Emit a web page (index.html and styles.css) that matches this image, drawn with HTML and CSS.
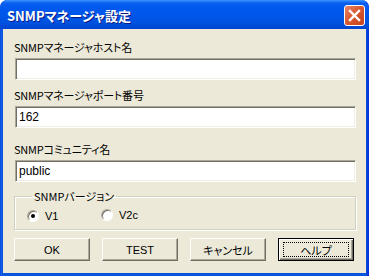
FILE: index.html
```html
<!DOCTYPE html>
<html lang="ja">
<head>
    <meta charset="UTF-8">
    <title>SNMPマネージャ設定</title>
    <link rel="stylesheet" href="styles.css">
</head>
<body>
    <div class="window">
        <div class="titlebar">
            <span class="title">SNMPマネージャ設定</span>
            <button class="close" title="閉じる">
                <svg width="13" height="13" viewBox="0 0 13 13">
                    <path d="M2 2 L11 11 M11 2 L2 11" stroke="#fff" stroke-width="2.4" stroke-linecap="square"/>
                </svg>
            </button>
        </div>

        <div class="client">
            <label class="field-label label-host">SNMPマネージャホスト名</label>
            <input class="textbox" type="text" value="">

            <label class="field-label label-port">SNMPマネージャポート番号</label>
            <input class="textbox" type="text" value="162">

            <label class="field-label label-community">SNMPコミュニティ名</label>
            <input class="textbox" type="text" value="public">

            <fieldset class="group">
                <legend>SNMPバージョン</legend>
                <div class="options">
                    <span class="option option-v1"><span class="radio checked"></span>V1</span>
                    <span class="option option-v2c"><span class="radio"></span>V2c</span>
                </div>
            </fieldset>

            <div class="buttons">
                <button class="btn">OK</button>
                <button class="btn">TEST</button>
                <button class="btn">キャンセル</button>
                <button class="btn default"><span class="focus">ヘルプ</span></button>
            </div>
        </div>
    </div>
</body>
</html>
```

FILE: styles.css
```css
* {
    margin: 0;
    padding: 0;
    box-sizing: border-box;
}

body {
    background-color: #fff;
    font-family: "Noto Sans CJK JP", sans-serif;
    font-size: 11px;
    font-feature-settings: "palt";
    color: #000;
}

/* Window frame */
.window {
    width: 369px;
    height: 276px;
    background: linear-gradient(to right, #0831d9 0, #166aee 1px, #0855dd 2px, #0855dd 366px, #0831d9 368px);
    border-radius: 7px 7px 0 0;
    display: flex;
    flex-direction: column;
    overflow: hidden;
}

.titlebar {
    height: 29px;
    display: flex;
    align-items: center;
    justify-content: space-between;
    padding: 0 4px 0 7px;
    background: linear-gradient(to bottom, #3d95ff 0, #0a5fef 3px, #0058ee 8px, #0055e6 18px, #0050dd 24px, #0044cf 29px);
    border-radius: 7px 7px 0 0;
}

.title {
    color: #fff;
    font-weight: bold;
    font-size: 13px;
    text-shadow: 1px 1px #0a1883;
    margin-top: 1px;
}

.close {
    width: 21px;
    height: 21px;
    border: 1px solid #fff;
    border-radius: 3px;
    background: linear-gradient(135deg, #e8866a 0%, #d95a32 45%, #c4411c 100%);
    display: flex;
    align-items: center;
    justify-content: center;
    margin-top: 2px;
}

/* Client area */
.client {
    flex: 1;
    margin: 0 3px 3px;
    background-color: #ece9d8;
    padding: 11px 11px 0;
    display: flex;
    flex-direction: column;
}

.field-label {
    display: block;
    line-height: 14px;
    height: 14px;
    letter-spacing: -0.2px;
}

.label-port {
    margin-top: 8px;
}

.label-community {
    margin-top: 14px;
}

.textbox {
    display: block;
    width: 341px;
    height: 22px;
    margin: 4px 0 0 1px;
    padding: 0 3px;
    font-family: "Liberation Sans", "Noto Sans CJK JP", sans-serif;
    font-size: 12px;
    color: #000;
    background-color: #fff;
    border: 1px solid;
    border-color: #aca899 #fff #fff #aca899;
    box-shadow: inset 1px 1px #716f64, inset -1px -1px #f1efe2;
    outline: none;
}

/* Version group */
.group {
    margin-top: 7px;
    width: 342px;
    height: 41px;
    border: 1px solid #d0d0bf;
    box-shadow: 1px 1px #fff, inset 1px 1px #fff;
    padding: 0 0 0 12px;
}

.group legend {
    padding: 0 2px;
    margin-left: 5px;
    line-height: 14px;
}

.options {
    display: grid;
    grid-template-columns: 74px 74px;
    margin-top: 5px;
}

.option {
    display: flex;
    align-items: center;
    gap: 6px;
    font-family: "Liberation Sans", sans-serif;
    font-size: 11px;
}

.option-v1 {
    margin-top: 2px;
}

.radio {
    width: 12px;
    height: 12px;
    border-radius: 50%;
    background-color: #fff;
    border: 1px solid;
    border-color: #aca899 #fff #fff #aca899;
    box-shadow: inset 1px 1px #716f64;
    display: flex;
    align-items: center;
    justify-content: center;
}

.radio.checked::after {
    content: "";
    width: 4px;
    height: 4px;
    border-radius: 50%;
    background-color: #000;
}

/* Buttons */
.buttons {
    display: flex;
    gap: 12px;
    margin-top: 8px;
}

.btn {
    width: 76px;
    height: 23px;
    font-family: "Liberation Sans", "Noto Sans CJK JP", sans-serif;
    font-size: 11px;
    font-feature-settings: "palt";
    color: #000;
    background-color: #ece9d8;
    border: 1px solid;
    border-color: #fff #716f64 #716f64 #fff;
    box-shadow: inset -1px -1px #aca899;
    display: flex;
    align-items: center;
    justify-content: center;
}

.btn.default {
    border: 1px solid #000;
    box-shadow: inset 1px 1px #fff, inset -1px -1px #716f64, inset -2px -2px #aca899;
}

.focus {
    width: 66px;
    height: 15px;
    border: 1px dotted #000;
    display: flex;
    align-items: center;
    justify-content: center;
}
```
